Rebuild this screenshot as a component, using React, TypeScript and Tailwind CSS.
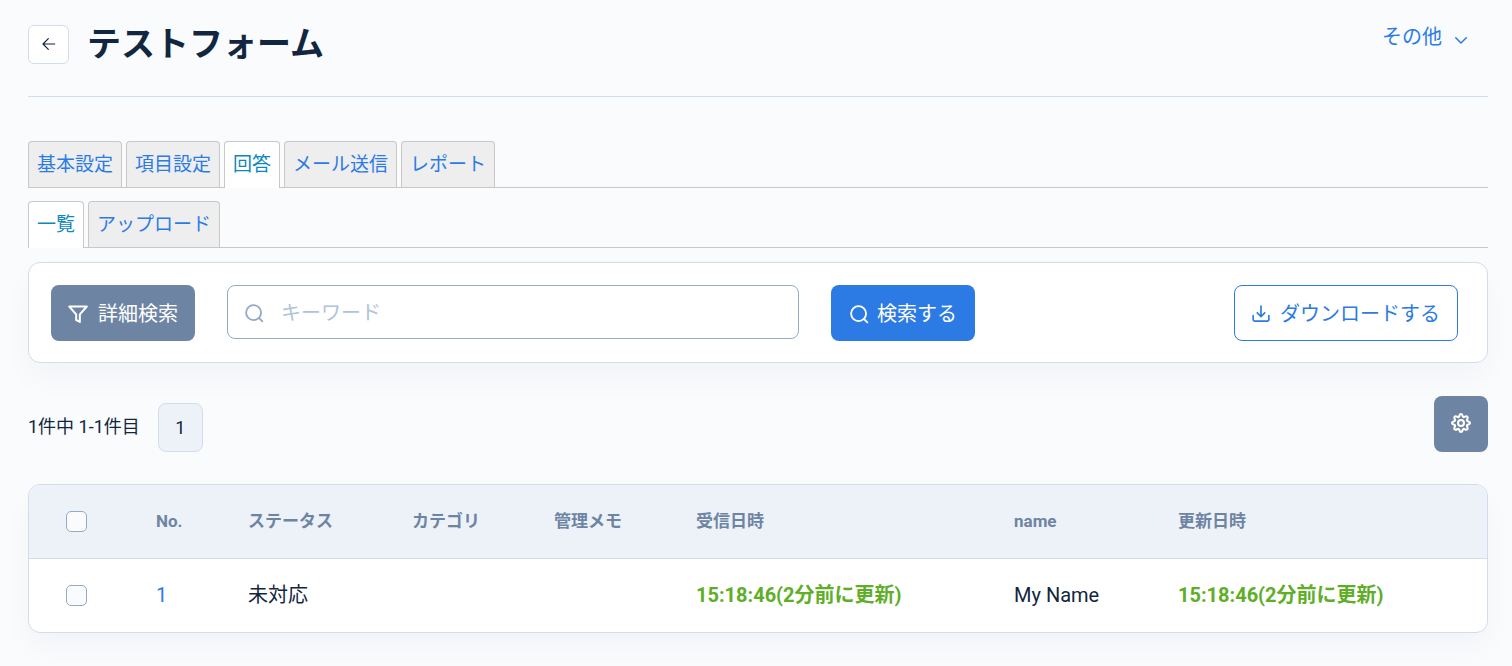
import type { ReactNode, SVGProps } from "react";

const FONT = "font-['Roboto','Noto_Sans_CJK_JP',sans-serif]";

function Icon({ children, ...props }: SVGProps<SVGSVGElement> & { children: ReactNode }) {
  return (
    <svg
      viewBox="0 0 24 24"
      fill="none"
      stroke="currentColor"
      strokeWidth={2}
      strokeLinecap="round"
      strokeLinejoin="round"
      aria-hidden="true"
      {...props}
    >
      {children}
    </svg>
  );
}

function SearchIcon() {
  return (
    <Icon className="size-5" strokeWidth={2.2}>
      <circle cx="11.5" cy="11.5" r="9" />
      <path d="M22 22l-4-4" />
    </Icon>
  );
}

type Tab = { label: string; active?: boolean };

const mainTabs: Tab[] = [
  { label: "基本設定" },
  { label: "項目設定" },
  { label: "回答", active: true },
  { label: "メール送信" },
  { label: "レポート" },
];

const subTabs: Tab[] = [{ label: "一覧", active: true }, { label: "アップロード" }];

function Tabs({ tabs, label }: { tabs: Tab[]; label: string }) {
  return (
    <nav aria-label={label} className="flex gap-1 border-b border-[#c8c8c8]">
      {tabs.map((tab) => (
        <a
          key={tab.label}
          href="#"
          aria-current={tab.active ? "page" : undefined}
          className={
            tab.active
              ? "-mb-px rounded-t border border-b-0 border-[#c8c8c8] bg-white px-2 pt-[9px] pb-[9px] text-[19px] leading-7 text-[#0d87bd]"
              : "rounded-t border border-b-0 border-[#c8c8c8] bg-[#eeeeee] px-2 pt-[9px] pb-2 text-[19px] leading-7 text-[#2c7be5]"
          }
        >
          {tab.label}
        </a>
      ))}
    </nav>
  );
}

function Checkbox({ label }: { label: string }) {
  return (
    <input
      type="checkbox"
      aria-label={label}
      className="block size-[21px] appearance-none rounded-[5px] border border-[#95aac9] bg-[#f9fbfd] checked:bg-[#2c7be5]"
    />
  );
}

const columns = ["No.", "ステータス", "カテゴリ", "管理メモ", "受信日時", "name", "更新日時"];

export default function App() {
  return (
    <div className={`min-h-screen bg-[#f9fbfd] pr-6 pl-7 text-[#12263f] ${FONT}`}>
      <header className="flex items-start border-b border-[#d2ddec] pt-[18px] pb-[26px]">
        <button
          type="button"
          aria-label="戻る"
          className="mt-[7px] flex h-[39px] w-[41px] items-center justify-center rounded-md border border-[#d2ddec] bg-white pb-0.5"
        >
          <Icon className="size-4" strokeWidth={1.8}>
            <path d="M20.5 12H3.5M11 20l-8-8 8-8" />
          </Icon>
        </button>
        <h1 className="ml-[18px] text-[34px] leading-[52px] font-bold">テストフォーム</h1>
        <button type="button" className="mt-1 mr-[18px] ml-auto flex items-center gap-[10px] text-xl leading-[30px] text-[#2c7be5]">
          その他
          <Icon className="mt-[5px] size-[18px]">
            <path d="M5 9l7 7 7-7" />
          </Icon>
        </button>
      </header>

      <div className="mt-11">
        <Tabs tabs={mainTabs} label="フォーム" />
      </div>
      <div className="mt-[13px]">
        <Tabs tabs={subTabs} label="回答" />
      </div>

      <form
        onSubmit={(e) => e.preventDefault()}
        className="mt-[14px] flex items-start rounded-xl border border-[#d2ddec] bg-white pt-[22px] pr-[29px] pb-[21px] pl-[22px] shadow-[0_15px_30px_rgba(18,38,63,0.03)]"
      >
        <button type="button" className="flex h-14 items-center gap-[10px] rounded-lg bg-[#6e84a3] px-[17px] pt-px text-xl text-white">
          <Icon className="size-5" strokeWidth={2.4}>
            <path d="M22.5 3h-21l8.3 9.5v6.7l4.4 2.3v-9z" />
          </Icon>
          詳細検索
        </button>
        <label className="ml-8 flex h-[54px] w-[572px] items-center gap-[17px] rounded-lg border border-[#95aac9] px-4 pt-px text-[#95aac9]">
          <SearchIcon />
          <input
            type="search"
            aria-label="キーワード"
            placeholder="キーワード"
            className="min-w-0 flex-1 bg-transparent text-xl text-[#12263f] outline-none placeholder:text-[#b1c2d9]"
          />
        </label>
        <button type="submit" className="ml-8 flex h-14 items-center gap-2 rounded-lg bg-[#2c7be5] px-[18px] pt-px text-xl text-white">
          <SearchIcon />
          検索する
        </button>
        <button type="button" className="ml-auto flex h-14 items-center gap-[10px] rounded-lg border border-[#2c7be5] bg-white px-[17px] pt-px text-xl text-[#2c7be5]">
          <Icon className="size-[18px]" strokeWidth={2.2}>
            <path d="M1.5 14v5a2.5 2.5 0 0 0 2.5 2.5h16a2.5 2.5 0 0 0 2.5-2.5v-5M7 10.5l5 5 5-5M12 1.5v14" />
          </Icon>
          ダウンロードする
        </button>
      </form>

      <div className="mt-[33px] flex items-start">
        <p className="mt-[17px] text-lg leading-7">1件中 1-1件目</p>
        <a
          href="#"
          aria-current="page"
          className="mt-[7px] ml-[18px] flex h-[49px] w-[45px] items-center justify-center rounded-lg border border-[#d2ddec] bg-[#edf2f9] text-lg"
        >
          1
        </a>
        <button type="button" aria-label="表示設定" className="ml-auto flex h-14 w-[54px] items-center justify-center rounded-lg bg-[#6e84a3] pb-0.5 text-white">
          <Icon className="size-[22px]" strokeWidth={2.3}>
            <circle cx="12" cy="12" r="3.2" />
            <path d="M12 2.2C14 2.2 13.3 5 14.6 5.5S17.300 3.600 18.900 5.100 17.900 8.100 18.500 9.400 21.800 10 21.800 12 19.100 13.300 18.500 14.600 20.400 17.300 18.900 18.900 15.900 17.900 14.600 18.500 14 21.800 12 21.800 10.700 19.100 9.400 18.500 6.700 20.400 5.100 18.900 6.100 15.900 5.500 14.600 2.200 14 2.200 12 4.900 10.700 5.500 9.400 3.600 6.700 5.100 5.100 8.100 6.100 9.400 5.500 10 2.200 12 2.200z" />
          </Icon>
        </button>
      </div>

      <div className="mt-8 overflow-hidden rounded-xl border border-[#d2ddec] bg-white shadow-[0_15px_30px_rgba(18,38,63,0.03)]">
        <table className="w-full table-fixed text-left whitespace-nowrap">
          <colgroup>
            <col className="w-[91px]" />
            <col className="w-[92px]" />
            <col className="w-[164px]" />
            <col className="w-[142px]" />
            <col className="w-[142px]" />
            <col className="w-[318px]" />
            <col className="w-[164px]" />
            <col />
          </colgroup>
          <thead className="bg-[#edf2f9] text-[17px] text-[#6e84a3]">
            <tr className="h-[73px] border-b border-[#d2ddec]">
              <th className="pl-[37px]">
                <Checkbox label="すべて選択" />
              </th>
              {columns.map((column) => (
                <th key={column} className="pl-9 font-bold">
                  {column}
                </th>
              ))}
            </tr>
          </thead>
          <tbody className="text-xl">
            <tr className="h-[74px]">
              <td className="pl-[37px]">
                <Checkbox label="1 を選択" />
              </td>
              <td className="pl-9">
                <a href="#" className="text-[#2c7be5]">
                  1
                </a>
              </td>
              <td className="pl-9">未対応</td>
              <td />
              <td />
              <td className="pl-9 font-bold text-[#5eae27]">15:18:46(2分前に更新)</td>
              <td className="pl-9">My Name</td>
              <td className="pl-9 font-bold text-[#5eae27]">15:18:46(2分前に更新)</td>
            </tr>
          </tbody>
        </table>
      </div>
    </div>
  );
}
